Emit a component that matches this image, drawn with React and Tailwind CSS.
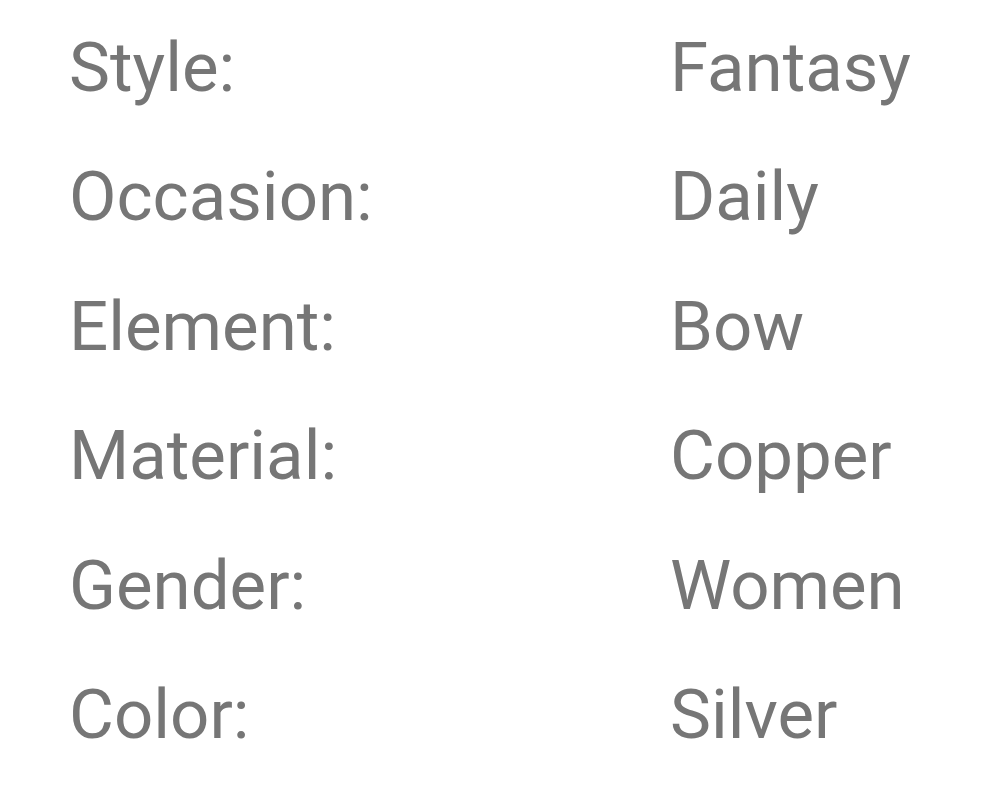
const rows = [
  ['Style:', 'Fantasy'],
  ['Occasion:', 'Daily'],
  ['Element:', 'Bow'],
  ['Material:', 'Copper'],
  ['Gender:', 'Women'],
  ['Color:', 'Silver'],
]

export default function App() {
  return (
    <div className="w-[989px] h-[793px] bg-white pt-[3px] pl-[69px] font-['Roboto',sans-serif] text-[69px] leading-[129.4px] text-[#767676]">
      {rows.map(([label, value]) => (
        <div key={label} className="flex">
          <span className="w-[601px]">{label}</span>
          <span>{value}</span>
        </div>
      ))}
    </div>
  )
}
